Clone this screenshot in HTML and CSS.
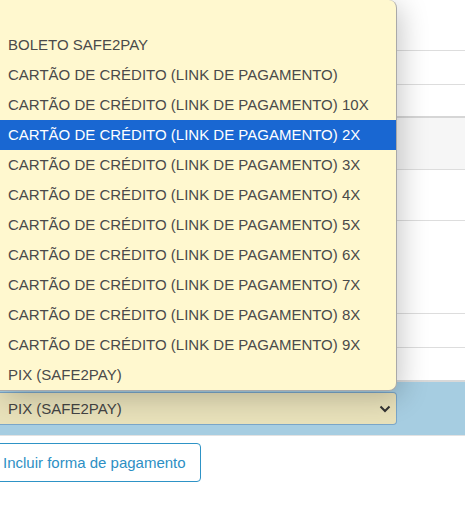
FILE: index.html
```html
<!DOCTYPE html>
<html lang="pt">
<head>
<meta charset="utf-8">
<title>Formas de pagamento</title>
<link rel="stylesheet" href="styles.css">
</head>
<body>
<div class="page">
  <div class="table">
    <div class="row r1"></div>
    <div class="row r2"></div>
    <div class="row r3"></div>
    <div class="row r4 striped"></div>
    <div class="row r5"></div>
    <div class="row r6"></div>
    <div class="row r7"></div>
    <div class="row r8"></div>
    <div class="row active">
      <div class="select">
        <span>PIX (SAFE2PAY)</span>
        <svg class="chev" width="12" height="8" viewBox="0 0 12 8"><path d="M1.5 1.5 L6 6 L10.5 1.5" fill="none" stroke="#333" stroke-width="2"/></svg>
      </div>
    </div>
  </div>
  <div class="actions">
    <button class="btn">Incluir forma de pagamento</button>
  </div>

  <ul class="dropdown">
    <li class="opt"></li>
    <li class="opt">BOLETO SAFE2PAY</li>
    <li class="opt">CARTÃO DE CRÉDITO (LINK DE PAGAMENTO)</li>
    <li class="opt">CARTÃO DE CRÉDITO (LINK DE PAGAMENTO) 10X</li>
    <li class="opt selected">CARTÃO DE CRÉDITO (LINK DE PAGAMENTO) 2X</li>
    <li class="opt">CARTÃO DE CRÉDITO (LINK DE PAGAMENTO) 3X</li>
    <li class="opt">CARTÃO DE CRÉDITO (LINK DE PAGAMENTO) 4X</li>
    <li class="opt">CARTÃO DE CRÉDITO (LINK DE PAGAMENTO) 5X</li>
    <li class="opt">CARTÃO DE CRÉDITO (LINK DE PAGAMENTO) 6X</li>
    <li class="opt">CARTÃO DE CRÉDITO (LINK DE PAGAMENTO) 7X</li>
    <li class="opt">CARTÃO DE CRÉDITO (LINK DE PAGAMENTO) 8X</li>
    <li class="opt">CARTÃO DE CRÉDITO (LINK DE PAGAMENTO) 9X</li>
    <li class="opt">PIX (SAFE2PAY)</li>
  </ul>
</div>
</body>
</html>
```

FILE: styles.css
```css
html, body {
  margin: 0;
  padding: 0;
  background: #ffffff;
  font-family: "Liberation Sans", Arial, sans-serif;
  font-size: 15px;
  overflow: hidden;
}

.page {
  position: relative;
  width: 465px;
  height: 509px;
}

.table {
  display: flex;
  flex-direction: column;
}

.row {
  border-bottom: 1px solid #dddddd;
  box-sizing: border-box;
}

.r1 { height: 51px; }
.r2 { height: 34px; }
.r3 { height: 33px; border-bottom: 2px solid #d6d6d6; }
.r4 { height: 52px; }
.r5 { height: 51px; }
.r6 { height: 93px; }
.r7 { height: 34px; }
.r8 { height: 34px; border-bottom: 2px solid #d8d8d8; }

.striped { background: #f6f6f6; }

.active {
  height: 54px;
  background: #a6cde1;
  border-bottom: 1px solid #e2e2e2;
  padding-top: 10px;
}

.select {
  width: 397px;
  height: 33px;
  box-sizing: border-box;
  border: 1px solid #7aa6c9;
  border-left: none;
  border-radius: 0 4px 4px 0;
  background: #e8e1ba;
  color: #444444;
  display: flex;
  align-items: center;
  justify-content: space-between;
  padding: 0 4px 0 8px;
}

.chev { margin-right: 1px; }

.actions {
  padding-top: 7px;
}

.btn {
  margin-left: -9px;
  width: 210px;
  height: 39px;
  border: 1px solid #2e93c6;
  border-radius: 4px;
  background: #ffffff;
  color: #2d8fc4;
  font-family: "Liberation Sans", Arial, sans-serif;
  font-size: 15px;
  text-align: left;
  padding: 0 0 0 11px;
}

.dropdown {
  position: absolute;
  top: 0;
  left: 0;
  width: 397px;
  margin: 0;
  padding: 0;
  list-style: none;
  background: #fff8cf;
  border-right: 1px solid #a9a9a9;
  border-bottom: 1px solid #a9a9a9;
  box-sizing: border-box;
  border-radius: 0 8px 8px 0;
  box-shadow: 4px 6px 28px rgba(0, 0, 0, 0.22);
  overflow: hidden;
}

.opt {
  height: 30px;
  line-height: 30px;
  padding-left: 8px;
  color: #4a4a4a;
  white-space: nowrap;
}

.opt.selected {
  background: #1967d2;
  color: #ffffff;
}
```
